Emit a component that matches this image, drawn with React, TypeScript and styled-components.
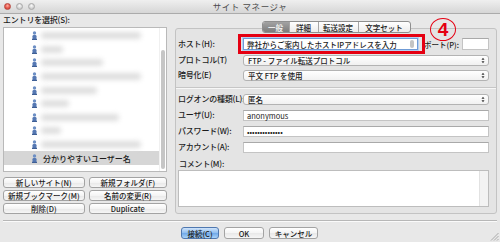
import React from 'react';
import styled, { createGlobalStyle } from 'styled-components';

const GlobalStyle = createGlobalStyle`
  html, body {
    margin: 0;
    padding: 0;
  }
  body {
    width: 500px;
    height: 242px;
    overflow: hidden;
    background: #e8e8e8;
    font-family: "Noto Sans CJK JP", "Noto Sans", sans-serif;
    color: #1c1c1c;
  }
`;

const Window = styled.div`
  position: relative;
  width: 500px;
  height: 242px;
  display: flex;
  flex-direction: column;
  background: #e8e8e8;
  overflow: hidden;
`;

/* title bar */
const TitleBar = styled.div`
  flex: none;
  height: 13px;
  display: grid;
  grid-template-columns: 1fr auto 1fr;
  align-items: center;
  background: linear-gradient(#efefef, #d6d6d6);
  border-bottom: 1px solid #ababab;
`;

const Lights = styled.div`
  display: flex;
  gap: 5px;
  padding-left: 4px;
`;

const Light = styled.span<{ $red?: boolean }>`
  width: 7px;
  height: 7px;
  box-sizing: border-box;
  border-radius: 50%;
  border: 1px solid ${(p) => (p.$red ? '#b8453c' : '#a9a9a9')};
  background: ${(p) =>
    p.$red
      ? 'radial-gradient(circle at 50% 35%, #ffb0a4, #e6574b 55%, #c53a30)'
      : 'radial-gradient(circle at 50% 35%, #fbfbfb, #d2d2d2 60%, #bdbdbd)'};
`;

const Title = styled.div`
  font-size: 8.5px;
  line-height: 13px;
  color: #4b4b4b;
  letter-spacing: 0.6px;
`;

/* main area */
const Main = styled.div`
  flex: none;
  height: 204px;
  display: flex;
  padding: 0 3px;
`;

const LeftColumn = styled.div`
  width: 164px;
  display: flex;
  flex-direction: column;
`;

const Label = styled.div`
  font-size: 8px;
  line-height: 12px;
  height: 12px;
  white-space: nowrap;
  font-weight: 500;
  letter-spacing: -0.2px;
`;

const TreeBox = styled.div`
  margin-top: 1px;
  height: 145px;
  display: flex;
  background: #fff;
  border: 1px solid #b9b9b9;
  box-sizing: border-box;
`;

const TreeList = styled.div`
  flex: 1;
  display: flex;
  flex-direction: column;
  padding-top: 1px;
`;

const TreeRow = styled.div<{ $selected?: boolean }>`
  height: 13.6px;
  display: flex;
  align-items: center;
  padding-left: 28px;
  gap: 4px;
  background: ${(p) => (p.$selected ? '#d6d6d6' : 'transparent')};
`;

const Blurred = styled.span`
  height: 7px;
  border-radius: 3px;
  background: #dedede;
  filter: blur(2.5px);
`;

const RowText = styled.span`
  font-size: 8px;
  font-weight: 500;
  white-space: nowrap;
  padding-left: 2px;
`;

const ScrollTrack = styled.div`
  width: 7px;
  display: flex;
  flex-direction: column;
  padding: 22px 1px 2px 1px;
  box-sizing: border-box;
  border-left: 1px solid #f0f0f0;
`;

const ScrollThumb = styled.div`
  flex: 1;
  border-radius: 3px;
  background: #c6c6c6;
`;

const ButtonGrid = styled.div`
  margin-top: 5px;
  display: grid;
  grid-template-columns: 1fr 1fr;
  gap: 2px 4px;
`;

const MacButton = styled.button<{ $primary?: boolean }>`
  height: 11px;
  padding: 0 4px;
  box-sizing: border-box;
  display: flex;
  align-items: center;
  justify-content: center;
  border-radius: 3px;
  font-family: "Noto Sans CJK JP", "Noto Sans", sans-serif;
  font-size: 7.5px;
  font-weight: 500;
  white-space: nowrap;
  color: #1c1c1c;
  border: 1px solid ${(p) => (p.$primary ? '#4f78b0' : '#a3a3a3')};
  background: ${(p) =>
    p.$primary
      ? 'linear-gradient(#cfe3fa, #8dbdf0 50%, #6ea7e8 51%, #a9d2f8)'
      : 'linear-gradient(#ffffff, #f4f4f4 50%, #e8e8e8 51%, #f6f6f6)'};
`;

const RightColumn = styled.div`
  position: relative;
  flex: 1;
  margin-left: 8px;
  display: flex;
  flex-direction: column;
  align-items: center;
`;

const Tabs = styled.div`
  margin-top: 7px;
  height: 12px;
  display: flex;
  position: relative;
  z-index: 1;
  border: 1px solid #8f8f8f;
  border-radius: 3px;
  box-sizing: border-box;
  overflow: hidden;
  background: linear-gradient(#ffffff, #ececec);
`;

const Tab = styled.div<{ $active?: boolean; $w: number }>`
  width: ${(p) => p.$w}px;
  display: flex;
  align-items: center;
  justify-content: center;
  font-size: 7.5px;
  font-weight: 500;
  white-space: nowrap;
  color: ${(p) => (p.$active ? '#fff' : '#1c1c1c')};
  background: ${(p) => (p.$active ? 'linear-gradient(#a3a3a3, #7c7c7c)' : 'transparent')};
  & + & {
    border-left: 1px solid #a6a6a6;
  }
`;

const Group = styled.div`
  align-self: stretch;
  margin-top: -5px;
  height: 186px;
  box-sizing: border-box;
  border: 1px solid #c3c3c3;
  border-radius: 3px;
  background: #e4e4e4;
  display: flex;
  flex-direction: column;
  padding: 9px 7px 6px 2px;
`;

const FieldRow = styled.div<{ $top: number }>`
  margin-top: ${(p) => p.$top}px;
  display: grid;
  grid-template-columns: 65px 1fr;
  align-items: center;
`;

const HostLine = styled.div`
  display: flex;
  align-items: center;
`;

const Field = styled.div<{ $h?: number }>`
  position: relative;
  flex: 1;
  height: ${(p) => p.$h ?? 11}px;
  box-sizing: border-box;
  display: flex;
  align-items: center;
  padding: 0 3px;
  background: #fff;
  border: 1px solid #c4c4c4;
  border-top-color: #a9a9a9;
  font-size: 7.5px;
  white-space: nowrap;
  overflow: visible;
`;

const FocusField = styled(Field)`
  justify-content: space-between;
  border: 1px solid #6f9bd6;
  box-shadow: 0 0 0 1px #b5d0f2;
  font-weight: 500;
`;

const CaretPill = styled.span`
  width: 4px;
  height: 8px;
  border-radius: 2px;
  background: #c4c4c4;
`;

const RedMark = styled.div`
  position: absolute;
  left: -6px;
  right: -8px;
  top: -5px;
  bottom: -5px;
  border: 3px solid #e50012;
  pointer-events: none;
`;

const PortLabel = styled.span`
  margin-left: 6px;
  margin-right: 3px;
  font-size: 7.5px;
  font-weight: 500;
  white-space: nowrap;
`;

const PortField = styled(Field)`
  flex: none;
  width: 27px;
`;

const Select = styled.div`
  height: 11px;
  box-sizing: border-box;
  display: flex;
  align-items: center;
  justify-content: space-between;
  padding: 0 3px 0 4px;
  border: 1px solid #b3b3b3;
  border-radius: 3px;
  background: linear-gradient(#ffffff, #f1f1f1);
  font-size: 7.5px;
  font-weight: 500;
  white-space: nowrap;
`;

const Groove = styled.div`
  margin: 6px -7px 0 -2px;
  height: 0;
  border-top: 1px solid #c6c6c6;
  border-bottom: 1px solid #f7f7f7;
`;

const CommentLabel = styled(Label)`
  margin-top: 6px;
  height: 10px;
  line-height: 10px;
  padding-left: 1px;
`;

const CommentBox = styled.div`
  margin-top: 1px;
  height: 42px;
  display: flex;
  background: #fff;
  border: 1px solid #bdbdbd;
  box-sizing: border-box;
`;

const CommentArea = styled.div`
  flex: 1;
`;

const CommentTrack = styled.div`
  width: 8px;
  background: #f3f3f3;
  border-left: 1px solid #e2e2e2;
`;

const Marker = styled.div`
  position: absolute;
  left: 255px;
  top: 4px;
  width: 26px;
  height: 23px;
  box-sizing: border-box;
  border: 1px solid #e50012;
  border-radius: 50%;
  display: flex;
  align-items: center;
  justify-content: center;
  font-family: "Liberation Sans", Arial, sans-serif;
  font-weight: 700;
  font-size: 19px;
  line-height: 19px;
  color: #e50012;
  z-index: 2;
`;

const Divider = styled.div`
  margin: 2px 3px 0 3px;
  border-top: 1px solid #b7b7b7;
  border-bottom: 1px solid #fafafa;
`;

const Footer = styled.div`
  display: flex;
  justify-content: center;
  gap: 5px;
  padding-top: 5px;
  padding-right: 1px;
`;

const FooterButton = styled(MacButton)<{ $w: number }>`
  width: ${(p) => p.$w}px;
  height: 12px;
`;

const Grip = styled.svg`
  position: absolute;
  right: 1px;
  bottom: 1px;
`;

const UserIcon = () => (
  <svg width="5" height="9" viewBox="0 0 5 9">
    <circle cx="2.5" cy="2" r="1.7" fill="#6d8fc4" />
    <rect x="0.5" y="4" width="4" height="4.5" rx="1.2" fill="#5578b3" />
    <rect x="0" y="7.8" width="5" height="1.2" fill="#3f5f95" />
  </svg>
);

const UpDown = () => (
  <svg width="4" height="7" viewBox="0 0 4 7">
    <path d="M0.5 2.8 L2 0.8 L3.5 2.8 Z" fill="#333" />
    <path d="M0.5 4.2 L2 6.2 L3.5 4.2 Z" fill="#333" />
  </svg>
);

const treeBlur = [100, 22, 62, 100, 56, 28, 78, 20, 100];

export default function App() {
  return (
    <Window>
      <GlobalStyle />
      <TitleBar>
        <Lights>
          <Light $red />
          <Light />
          <Light />
        </Lights>
        <Title>サイト マネージャ</Title>
        <div />
      </TitleBar>

      <Main>
        <LeftColumn>
          <Label>エントリを選択(S):</Label>
          <TreeBox>
            <TreeList>
              {treeBlur.map((w, i) => (
                <TreeRow key={i}>
                  <UserIcon />
                  <Blurred style={{ width: w }} />
                </TreeRow>
              ))}
              <TreeRow $selected>
                <UserIcon />
                <RowText>分かりやすいユーザー名</RowText>
              </TreeRow>
            </TreeList>
            <ScrollTrack>
              <ScrollThumb />
            </ScrollTrack>
          </TreeBox>
          <ButtonGrid>
            <MacButton>新しいサイト(N)</MacButton>
            <MacButton>新規フォルダ(F)</MacButton>
            <MacButton>新規ブックマーク(M)</MacButton>
            <MacButton>名前の変更(R)</MacButton>
            <MacButton>削除(D)</MacButton>
            <MacButton>Duplicate</MacButton>
          </ButtonGrid>
        </LeftColumn>

        <RightColumn>
          <Tabs>
            <Tab $active $w={26}>一般</Tab>
            <Tab $w={28}>詳細</Tab>
            <Tab $w={39}>転送設定</Tab>
            <Tab $w={51}>文字セット</Tab>
          </Tabs>
          <Marker>4</Marker>
          <Group>
            <FieldRow $top={0}>
              <Label>ホスト(H):</Label>
              <HostLine>
                <FocusField $h={12}>
                  <span>弊社からご案内したホストIPアドレスを入力</span>
                  <CaretPill />
                  <RedMark />
                </FocusField>
                <PortLabel>ポート(P):</PortLabel>
                <PortField $h={12} />
              </HostLine>
            </FieldRow>
            <FieldRow $top={4}>
              <Label>プロトコル(T)</Label>
              <Select>
                <span>FTP - ファイル転送プロトコル</span>
                <UpDown />
              </Select>
            </FieldRow>
            <FieldRow $top={3}>
              <Label>暗号化(E)</Label>
              <Select>
                <span>平文 FTP を使用</span>
                <UpDown />
              </Select>
            </FieldRow>
            <Groove />
            <FieldRow $top={4}>
              <Label>ログオンの種類(L):</Label>
              <Select>
                <span>匿名</span>
                <UpDown />
              </Select>
            </FieldRow>
            <FieldRow $top={4}>
              <Label>ユーザ(U):</Label>
              <Field>anonymous</Field>
            </FieldRow>
            <FieldRow $top={4}>
              <Label>パスワード(W):</Label>
              <Field>••••••••••••••</Field>
            </FieldRow>
            <FieldRow $top={4}>
              <Label>アカウント(A):</Label>
              <Field />
            </FieldRow>
            <CommentLabel>コメント(M):</CommentLabel>
            <CommentBox>
              <CommentArea />
              <CommentTrack />
            </CommentBox>
          </Group>
        </RightColumn>
      </Main>

      <Divider />
      <Footer>
        <FooterButton $primary $w={38}>接続(C)</FooterButton>
        <FooterButton $w={40}>OK</FooterButton>
        <FooterButton $w={49}>キャンセル</FooterButton>
      </Footer>

      <Grip width="9" height="9" viewBox="0 0 9 9">
        <path d="M8.5 1 L1 8.5 M8.5 4 L4 8.5 M8.5 7 L7 8.5" stroke="#9a9a9a" strokeWidth="0.8" />
      </Grip>
    </Window>
  );
}
